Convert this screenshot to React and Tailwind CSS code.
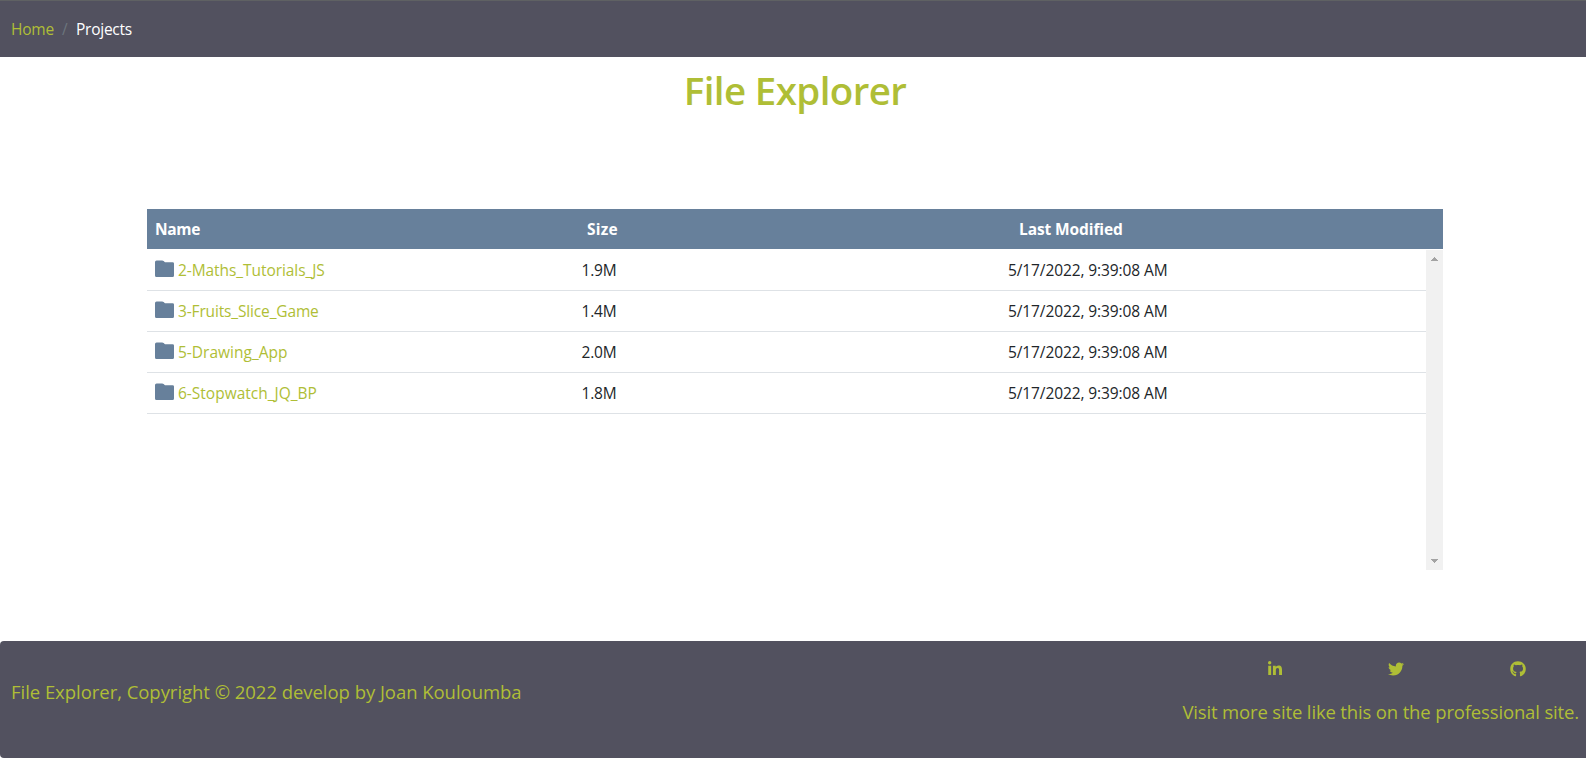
import { FaGithub, FaLinkedinIn, FaTwitter } from "react-icons/fa";

const projects = [
  { name: "2-Maths_Tutorials_JS", size: "1.9M", tracking: "tracking-[-0.07px]" },
  { name: "3-Fruits_Slice_Game", size: "1.4M", tracking: "tracking-[-0.15px]" },
  { name: "5-Drawing_App", size: "2.0M", tracking: "tracking-normal" },
  { name: "6-Stopwatch_JQ_BP", size: "1.8M", tracking: "tracking-normal" },
];

function FolderIcon() {
  return (
    <svg viewBox="0 0 19 17" className="mt-[2px] h-[17px] w-[19px] shrink-0 fill-[#67809b]">
      <path d="M0 2Q0 .4 1.6 .4H7.2Q8 .4 8.6 1L10 2.2H17.6Q19 2.2 19 3.6V15.5Q19 17 17.6 17H1.4Q0 17 0 15.5Z" />
    </svg>
  );
}

function ScrollBar() {
  return (
    <div className="flex w-[17px] flex-col items-center justify-between bg-[#f1f1f1] pt-[7px] pb-[7px]">
      <svg viewBox="0 0 7 4" className="h-1 w-[7px] fill-[#a3a3a3]" shapeRendering="crispEdges">
        <path d="M3 0h1v1h1v1h1v1h1v1H0V3h1V2h1V1h1z" />
      </svg>
      <svg viewBox="0 0 7 4" className="h-1 w-[7px] fill-[#a3a3a3]" shapeRendering="crispEdges">
        <path d="M3 4h1V3h1V2h1V1h1V0H0v1h1v1h1v1h1z" />
      </svg>
    </div>
  );
}

export default function App() {
  return (
    <div className="flex h-[758px] flex-col overflow-hidden bg-white font-['Open_Sans','Noto_Sans',sans-serif] text-[15.5px] leading-6 text-[#212529]">
      <nav className="flex h-[57px] shrink-0 items-center border-t border-[#5f6163] bg-[#52515f] pb-px pl-[11px]">
        <a className="w-[43px] text-[#afbe36] tracking-[-0.2px]">Home</a>
        <span className="w-[22px] pl-2 text-[#6c757d]">/</span>
        <span className="tracking-[-0.25px] text-white">Projects</span>
      </nav>

      <h1 className="mt-[9px] h-12 pl-[4px] text-center text-[38.5px] leading-12 font-semibold tracking-[-0.62px] text-[#afbe36]">
        File Explorer
      </h1>

      <main className="mt-[95px] ml-[147px] w-[1296px]">
        <div className="grid h-10 grid-cols-[432px_432px_1fr] bg-[#67809b] py-2 pl-2 font-bold text-white">
          <span className="tracking-[-0.3px]">Name</span>
          <span className="tracking-[0.2px]">Size</span>
          <span className="tracking-[-0.1px]">Last Modified</span>
        </div>
        <div className="mt-px flex h-80">
          <div className="flex-1">
            {projects.map((p) => (
              <div key={p.name} className="grid h-[41px] grid-cols-[426.5px_426.5px_1fr] border-b border-[#dee2e6] py-2 pl-2">
                <div className="flex gap-1">
                  <FolderIcon />
                  <a className={`text-[#afbe36] ${p.tracking}`}>{p.name}</a>
                </div>
                <span className="tracking-[-0.2px]">{p.size}</span>
                <span className="tracking-[-0.1px]">5/17/2022, 9:39:08 AM</span>
              </div>
            ))}
          </div>
          <ScrollBar />
        </div>
      </main>

      <footer className="mt-[71px] flex h-[117px] shrink-0 justify-between rounded-l-[4px] bg-[#52515f] pl-[11px] text-[18.5px] leading-7 text-[#afbe36]">
        <p className="mt-[37px] tracking-[-0.04px]">
          File Explorer, Copyright © 2022 develop by Joan Kouloumba
        </p>
        <div className="flex flex-col items-end pr-[7px]">
          <div className="mt-5 grid w-[365px] grid-cols-3 justify-items-center text-[16px]">
            <FaLinkedinIn />
            <FaTwitter />
            <FaGithub />
          </div>
          <p className="mt-[21px] tracking-[-0.15px]">Visit more site like this on the professional site.</p>
        </div>
      </footer>
    </div>
  );
}
